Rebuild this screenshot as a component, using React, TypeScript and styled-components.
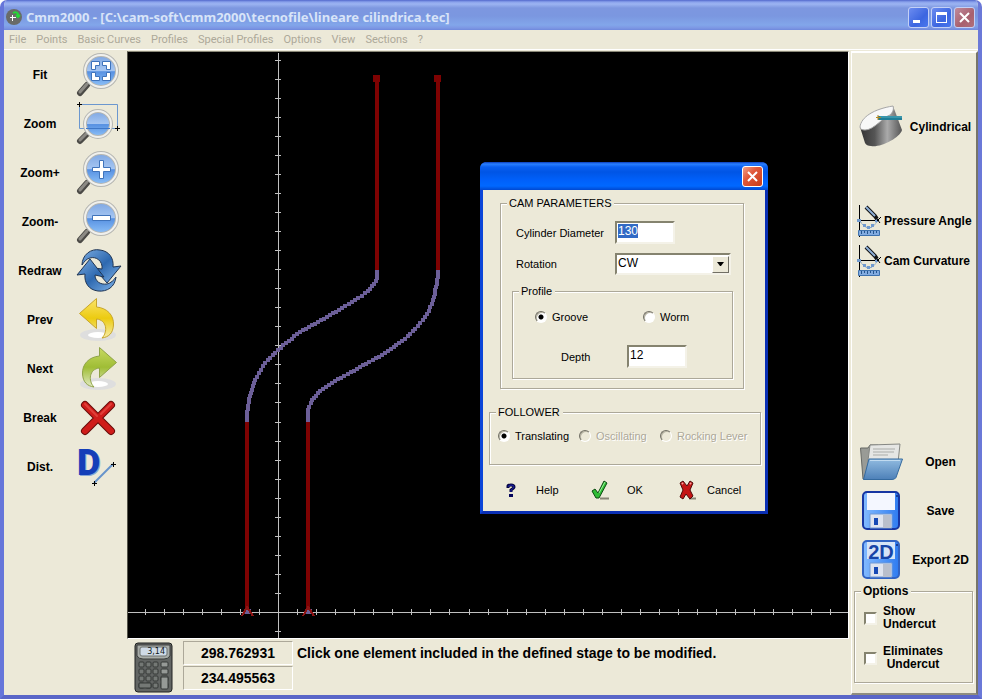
import React from 'react';
import styled, { createGlobalStyle } from 'styled-components';

const beige = '#ece9d8';
const line = '#aca899';

const GlobalStyle = createGlobalStyle`
  * { box-sizing: border-box; }
  html, body, #root { height: 100%; }
  body { margin: 0; background: #fff; font: 11px/14px "Liberation Sans", sans-serif; color: #000; }
  button, input, select { font: inherit; color: inherit; }
  button { background: none; border: 0; padding: 0; }
`;

/* ---------- window frame ---------- */
const Window = styled.div`
  display: flex; flex-direction: column; height: 100vh; overflow: hidden;
  border: 4px solid #6b79d8; border-top: 0;
  border-left-color: #6676da; border-bottom-color: #5a66c8;
  border-radius: 7px 7px 0 0; background: ${beige};
`;
const TitleBar = styled.header`
  display: flex; align-items: center; gap: 4px; flex: none; height: 30px;
  margin: 0 -4px; padding: 4px 7px 0 6px;
  background: linear-gradient(#5268cc 0, #8aa2ec 2px, #9cb4f2 4px, #7d97e0 8px, #7b97e0 16px, #82a6ea 25px, #7d97e4 28px, #6f88dc 30px);
`;
const Title = styled.h1`
  flex: 1; margin: 0; color: #d8e4f8; font: bold 13px/20px "Noto Sans", sans-serif; white-space: nowrap;
`;
const TitleButtons = styled.div`display: flex; gap: 2px;`;
const TitleButton = styled.button<{ $close?: boolean }>`
  width: 21px; height: 21px; border: 1px solid #c3d0f6; border-radius: 3px; display: grid; place-items: center;
  background: ${p => p.$close ? 'linear-gradient(135deg, #c08a9c, #a8606e 60%, #b0707c)' : 'linear-gradient(135deg, #6c8cf0, #3c66e0 60%, #4a78ee)'};
`;
const MenuBar = styled.nav`
  display: flex; flex: none; gap: 10px; height: 20px; padding: 3px 5px 0; border-bottom: 1px solid #fff;
`;
const MenuItem = styled.button`color: #aca899; font: 11px/14px "Roboto", sans-serif; height: 14px;`;
const Body = styled.div`display: flex; flex: 1; min-height: 0;`;

/* ---------- tool columns ---------- */
const LeftBar = styled.aside`flex: none; width: 123px; display: flex; flex-direction: column;`;
const ToolButton = styled.button`
  display: grid; grid-template-columns: 72px 46px; align-items: center; height: 49px;
  font: bold 12px/14px "Liberation Sans", sans-serif; text-align: center;
  svg { display: block; }
`;
const Center = styled.main`flex: 1; min-width: 0; display: flex; flex-direction: column;`;
const Stage = styled.div`
  position: relative; flex: 1; min-height: 0; background: #000; overflow: hidden;
  border: 1px solid; border-color: #8a8878 #fff #fff #55544a; margin-top: 1px;
`;
const Plot = styled.svg`display: block; width: 100%; height: 100%;`;
const StatusBar = styled.footer`
  flex: none; display: grid; grid-template-columns: 40px 110px 1fr; column-gap: 4px; height: 56px; padding: 2px 0 0 7px;
`;
const CalcButton = styled.button`width: 40px; height: 53px; padding-top: 1px; svg { display: block; }`;
const Coordinates = styled.div`display: flex; flex-direction: column; gap: 1px; margin-left: 5px;`;
const Coordinate = styled.output`
  height: 24px; width: 110px; border: 1px solid; border-color: #aca899 #fff #fff #aca899;
  font: bold 14px/22px "Liberation Sans", sans-serif; text-align: center;
`;
const Message = styled.p`
  margin: 0 0 0 5px; padding-top: 4px; font: bold 14px/16px "Liberation Sans", sans-serif; white-space: nowrap;
`;
const RightBar = styled.aside`
  flex: none; width: 127px; display: flex; flex-direction: column; margin: 1px 0 0 2px; padding: 49px 3px 10px 2px;
  border: 2px solid; border-color: #fff #77756a #8f8d80 #fff; border-left-width: 1px; 
`;
const SideButton = styled.button<{ $compact?: boolean }>`
  display: grid; align-items: center; height: ${p => p.$compact ? 40 : 49}px; flex: none;
  grid-template-columns: ${p => p.$compact ? '28px 1fr' : '54px 1fr'}; column-gap: ${p => p.$compact ? 2 : 0}px;
  font: bold 12px/14px "Liberation Sans", sans-serif; white-space: nowrap; text-align: ${p => p.$compact ? 'left' : 'center'};
  svg { display: block; justify-self: ${p => p.$compact ? 'end' : 'center'}; }
`;
const SideGroup = styled.div<{ $gap?: boolean }>`
  display: flex; flex-direction: column; margin-top: ${p => p.$gap ? '50px' : 'auto'};
`;

/* ---------- form parts ---------- */
const Group = styled.fieldset`
  margin: 0; padding: 0; min-width: 0; border: 1px solid ${line};
  box-shadow: 1px 1px 0 #fff, inset 1px 1px 0 #fff;
`;
const Legend = styled.legend<{ $bold?: boolean; $start?: number }>`
  margin-left: ${p => p.$start ?? 6}px; padding: 0 3px 0 2px; background: ${beige};
  font: ${p => p.$bold ? 'bold 12px' : '11px'}/14px "Liberation Sans", sans-serif;
`;
const OptionsGroup = styled(Group)`
  display: flex; flex-direction: column; gap: 14px; padding: 7px 0 11px 9px;
`;
const CheckLabel = styled.label<{ $centered?: boolean }>`
  display: flex; align-items: center; gap: 6px; font: bold 12px/13px "Liberation Sans", sans-serif;
  text-align: ${p => p.$centered ? 'center' : 'left'};
`;
const CheckBox = styled.input`
  appearance: none; flex: none; margin: 0; width: 13px; height: 13px; background: #fff;
  border: 2px solid; border-color: #85836f #f4f2e8 #f4f2e8 #85836f;
  &:checked { background: #333; }
`;
const Radio = styled.input`
  appearance: none; flex: none; margin: 0; width: 12px; height: 12px; border-radius: 50%; background: #fff;
  border: 1px solid; border-color: #716f64 #fff #fff #716f64; box-shadow: inset 1px 1px 0 #b8b5a4;
  &:checked { background: radial-gradient(circle at 5px 5px, #000 2px, #fff 3px); }
  &:disabled { background: ${beige}; }
`;
const RadioLabel = styled.label<{ $disabled?: boolean }>`
  display: flex; align-items: center; gap: 5px; white-space: nowrap;
  ${p => p.$disabled ? 'color: #aca899; text-shadow: 1px 1px 0 #fff;' : ''}
`;

/* ---------- dialog ---------- */
const Dialog = styled.form`
  position: absolute; left: 352px; top: 110px; width: 288px; background: ${beige};
  border: 3px solid #0b45d8; border-top: 0; border-right-color: #0a2fb4; border-bottom-color: #0a2fb4;
  border-radius: 7px 7px 0 0; font: 11px/14px "Liberation Sans", sans-serif;
`;
const DialogTitle = styled.div`
  display: flex; justify-content: flex-end; align-items: center; height: 28px; margin: 0 -3px; padding: 1px 5px 0 0;
  border-radius: 6px 6px 0 0;
  background: linear-gradient(#0a3ab8 0, #2a80ff 2px, #0a5ff0 5px, #0055e5 10px, #0060fa 18px, #0068ff 24px, #0048d0 28px);
`;
const DialogClose = styled.button`
  width: 21px; height: 21px; border: 1px solid #fff; border-radius: 3px; display: grid; place-items: center;
  background: linear-gradient(135deg, #f0a088, #e0583a 40%, #c83c18);
`;
const DialogBody = styled.div`padding: 6px 4px 5px 6px; display: flex; flex-direction: column;`;
const CamGroup = styled(Group)`
  margin: 0 17px 16px 11px; padding: 11px 10px 9px 11px; display: flex; flex-direction: column;
`;
const FieldRow = styled.div`
  display: grid; grid-template-columns: 99px 1fr; align-items: center; padding-left: 4px; margin-bottom: 9px;
`;
const TextBox = styled.input`
  width: 60px; height: 23px; padding: 0 1px 4px; background: #fff; outline: 0; border-radius: 0;
  border: 2px solid; border-color: #85836f #f4f2e8 #f4f2e8 #85836f; font-size: 12px;
  &::selection { background: #316ac5; color: #fff; }
`;
const SelectBox = styled.div`
  display: grid; width: 116px; height: 22px;
  & > * { grid-area: 1 / 1; }
`;
const Select = styled.select`
  appearance: none; width: 100%; height: 22px; padding: 0 20px 2px 1px; background: #fff; border-radius: 0; outline: 0;
  border: 2px solid; border-color: #85836f #f4f2e8 #f4f2e8 #85836f; font-size: 12px;
`;
const Arrow = styled.span`
  justify-self: end; align-self: center; width: 17px; height: 17px; margin-right: 2px; display: grid; place-items: center;
  pointer-events: none; background: ${beige}; border: 1px solid; border-color: #fff #716f64 #716f64 #fff;
`;
const ProfileGroup = styled(Group)`padding: 12px 0 10px; display: flex; flex-direction: column; gap: 21px;`;
const ProfileChoices = styled.div`display: grid; grid-template-columns: 108px 1fr; padding-left: 22px;`;
const DepthRow = styled.div`display: grid; grid-template-columns: 66px 1fr; align-items: center; padding-left: 48px;`;
const FollowerGroup = styled(Group)`
  display: grid; grid-template-columns: 81px 81px 1fr; padding: 10px 0 21px 8px;
`;
const Actions = styled.div`display: grid; grid-template-columns: 88px 88px 1fr; margin-top: 9px; padding-left: 14px;`;
const Action = styled.button<{ $gap: number }>`
  display: flex; align-items: center; gap: ${p => p.$gap}px; height: 32px;
`;

/* ---------- icons ---------- */
type LensKind = 'fit' | 'zoom' | 'plus' | 'minus';
function LensIcon({ kind }: { kind: LensKind }) {
  const small = kind === 'zoom';
  const cx = small ? 22 : 25, cy = small ? 25 : 21, r = small ? 13 : 16;
  const id = 'lens-' + kind;
  return (
    <svg width="46" height="49" viewBox="0 0 46 49" aria-hidden="true">
      <defs>
        <linearGradient id={id} x1="0" y1="0" x2="0" y2="1">
          <stop offset="0" stopColor="#7da6e2" /><stop offset=".5" stopColor="#a6c6f2" />
          <stop offset=".52" stopColor="#5791e2" /><stop offset="1" stopColor="#8fc2f8" />
        </linearGradient>
      </defs>
      {small && <path d="M3.500 5.500H41.500V29.500H3.500Z" fill="none" stroke="#6b97cf" strokeWidth="1" />}
      <path d={small ? 'M4 42L11 35' : 'M4 43L11 35'} stroke="#4c4b47" strokeWidth="6" strokeLinecap="round" />
      <path d={small ? 'M4 41L11 34' : 'M4 42L11 34'} stroke="#8c8a84" strokeWidth="3" strokeLinecap="round" />
      <circle cx={cx} cy={cy} r={r} fill={`url(#${id})`} stroke="#b5b6b2" strokeWidth="4" />
      <circle cx={cx} cy={cy} r={r} fill="none" stroke="#f0f0ec" strokeWidth="2" />
      {small && <path d="M10 29.500H34" stroke="#3f78c8" />}
      {small && <path d="M3.500 3V8M1 5.500H6M41.500 27V32M39 29.500H44" stroke="#000" />}
      {kind === 'fit' && (
        <path
          d="M15.500 11.500h8v4h-4v4h-4zM26.500 11.500h8v8h-4v-4h-4zM15.500 22.500h4v4h4v4h-8zM30.500 22.500h4v8h-8v-4h4z"
          fill="#fff" stroke="#3f73bb"
        />
      )}
      {kind === 'plus' && <path d="M23.500 12.500h4v7h7v4h-7v7h-4v-7h-7v-4h7z" fill="#fff" stroke="#3f73bb" />}
      {kind === 'minus' && <path d="M16.500 18.500h18v5h-18z" fill="#fff" stroke="#3f73bb" />}
    </svg>
  );
}

function RedrawIcon() {
  return (
    <svg width="46" height="49" viewBox="0 0 46 49" aria-hidden="true">
      <defs>
        <linearGradient id="swirl" x1="0" y1="0" x2="1" y2="1">
          <stop offset="0" stopColor="#78a9df" /><stop offset=".5" stopColor="#2e69b0" /><stop offset="1" stopColor="#7eb2e8" />
        </linearGradient>
      </defs>
      <g fill="url(#swirl)" stroke="#1f3554" strokeLinejoin="round">
        <path d="M6 19C6 9 15 2 24 4C33 5 38 12 37 21L45 20L31 37L18 22L26 23C27 15 20 10 14 12C10 13 8 16 6 19Z" />
        <path d="M40 31C39 41 31 46 22 45C13 44 8 37 9 28L1 29L14 13L28 31L19 29C19 35 24 39 31 38C35 37 38 34 40 31Z" />
      </g>
    </svg>
  );
}

function ArrowIcon({ next }: { next?: boolean }) {
  const id = next ? 'next-arrow' : 'prev-arrow';
  return (
    <svg width="46" height="49" viewBox="0 0 46 49" aria-hidden="true">
      <defs>
        <linearGradient id={id} x1="0" y1="0" x2="0" y2="1">
          <stop offset="0" stopColor={next ? '#c8da62' : '#fbe46a'} />
          <stop offset=".5" stopColor={next ? '#9fbd35' : '#eccb10'} />
          <stop offset="1" stopColor={next ? '#e3ebc4' : '#f6edaa'} />
        </linearGradient>
      </defs>
      <ellipse cx="22" cy="40" rx="18" ry="6" fill="#dedede" />
      <ellipse cx="22" cy="40" rx="10" ry="3" fill="#fff" />
      <path
        transform={next ? 'translate(44 0) scale(-1 1)' : undefined}
        d="M3.500 18.500L20.500 3.500V12C31 13 38 20 37.500 30C37 38 33 42 26 43C32 37 31 25 20.500 24V33.500Z"
        fill={`url(#${id})`} stroke={next ? '#8fa347' : '#c7a52a'} strokeLinejoin="round"
      />
    </svg>
  );
}

function BreakIcon() {
  return (
    <svg width="46" height="49" viewBox="0 0 46 49" aria-hidden="true">
      <path d="M9 12L35 38M35 12L9 38" stroke="#680c0a" strokeWidth="8" strokeLinecap="round" />
      <path d="M9 12L35 38M35 12L9 38" stroke="#cf1c1a" strokeWidth="6" strokeLinecap="round" />
      <path d="M9 11L21 23M35 11L25 21" stroke="#e0403a" strokeWidth="2" strokeLinecap="round" />
    </svg>
  );
}

function DistanceIcon() {
  return (
    <svg width="46" height="49" viewBox="0 0 46 49" aria-hidden="true">
      <text x="2" y="34" fontFamily="Roboto, sans-serif" fontWeight="900" fontSize="36" fill="#86a6d6">D</text>
      <text x="1" y="33" fontFamily="Roboto, sans-serif" fontWeight="900" fontSize="36" fill="#143fb8">D</text>
      <path d="M18 41L37 22" stroke="#6793cb" strokeWidth="2" />
      <path d="M18.500 39V44M16 41.500H21M37.500 20V25M35 22.500H40" stroke="#000" />
    </svg>
  );
}

function CylinderIcon() {
  return (
    <svg width="46" height="44" viewBox="0 0 46 44" aria-hidden="true">
      <defs>
        <linearGradient id="metal"><stop offset="0" stopColor="#343434" /><stop offset=".35" stopColor="#555" />
          <stop offset=".65" stopColor="#aaa" /><stop offset="1" stopColor="#555" /></linearGradient>
      </defs>
      <path d="M2 22C12 26 26 16 35 1L44 25C42 33 22 43 13 41C10 41 8 40 7 38Z" fill="url(#metal)" />
      <path d="M2 22C3 12 16 4 35 1C36 4 35 7 32 10C25 12 16 25 7 25C4 25 2 24 2 22Z" fill="#f8f8f8" stroke="#a6a6a6" />
      <path d="M20 13H44" stroke="#207e97" strokeWidth="4" />
      <path d="M22 12H44" stroke="#54aec0" />
      <path d="M20 10V15M18 12.500H23" stroke="#b58920" />
    </svg>
  );
}

function DraftIcon() {
  return (
    <svg width="26" height="34" viewBox="0 0 26 34" aria-hidden="true">
      <path d="M3.500 1V33M1 16.500H23" stroke="#000" />
      <path d="M4 17C9 26 17 26 21 17" fill="none" stroke="#6b96c8" strokeDasharray="3 1" />
      <path d="M1 15h4v3H1zM7 20h3v3H7zM15 20h3v3h-3zM11 22h3v3h-3zM19 15h3v3h-3z" fill="#719bcf" />
      <path d="M10 3L19 12L21 15" fill="none" stroke="#111" strokeWidth="4" />
      <path d="M10 3L19 12" stroke="#8fb0d8" strokeWidth="2" />
      <path d="M21 17L25 13M21 15L24 19" stroke="#000" />
      <path d="M2.500 26.500H23.500V31.500H2.500Z" fill="#82abe0" stroke="#3e72ae" />
      <path d="M5.500 27v3M8.500 27v2M11.500 27v3M14.500 27v2M17.500 27v3M20.500 27v2" stroke="#24568e" />
    </svg>
  );
}

function FolderIcon() {
  return (
    <svg width="46" height="40" viewBox="0 0 46 40" aria-hidden="true">
      <defs><linearGradient id="folder" x1="0" y1="0" x2="0" y2="1"><stop stopColor="#91bbe0" /><stop offset="1" stopColor="#4d80b8" /></linearGradient></defs>
      <path d="M2.500 6H10L12 3H20V37H5Z" fill="#999b96" stroke="#676965" />
      <path d="M12 3L42 2L39 30L8 34Z" fill="#e5e6e4" stroke="#858783" />
      <path d="M15 7H37M15 10H36M15 13H30" stroke="#aaaca9" />
      <path d="M11 17H44.500L38 35.500Q37 37.500 34 37.500H5.500Z" fill="url(#folder)" stroke="#356a9f" />
      <path d="M12 18.500H42" stroke="#c1dbf0" />
    </svg>
  );
}

function DiskIcon({ twoD }: { twoD?: boolean }) {
  const id = twoD ? 'disk-export' : 'disk-save';
  return (
    <svg width="40" height="41" viewBox="0 0 40 41" aria-hidden="true">
      <defs><linearGradient id={id}><stop stopColor="#83bbff" /><stop offset="1" stopColor="#2e7bf0" /></linearGradient></defs>
      <rect x="2" y="2" width="36" height="37" rx="4" fill={`url(#${id})`} stroke={twoD ? '#3163c3' : '#1736a3'} strokeWidth="2" />
      <path d="M6 3H34V20H6Z" fill={twoD ? '#d6e4f7' : '#f4f7ff'} />
      <path d="M9 24H31V38H9Z" fill="#dfe4ef" stroke="#7199d5" />
      <path d="M22 25H30V38H22Z" fill="#b9bfcc" />
      <path d="M13 28H17V35H13Z" fill="#1749b5" />
      <path d="M35 5h2v2h-2z" fill="#173e96" />
      {twoD && <text x="20" y="20" textAnchor="middle" fontFamily="Liberation Sans, sans-serif" fontWeight="bold" fontSize="20" fill="#1644a8">2D</text>}
    </svg>
  );
}

function CalculatorIcon() {
  const keys = [0, 1, 2, 3].flatMap(r => [0, 1, 2, 3].map(c => ({ r, c })));
  return (
    <svg width="40" height="52" viewBox="0 0 40 52" aria-hidden="true">
      <rect x="1" y="1" width="37" height="49" rx="3" fill="#626563" stroke="#202322" />
      <path d="M3 3H36V14Q34 17 30 17H9Q5 17 3 14Z" fill="#a8aca8" stroke="#3a3d3c" />
      <rect x="6" y="5" width="27" height="9" rx="2" fill="#cfdae6" stroke="#6e7370" />
      <text x="31" y="12" textAnchor="end" fontFamily="DejaVu Sans, sans-serif" fontSize="8" fill="#101820">3,14</text>
      {keys.map(({ r, c }) => (
        <rect key={`${r}-${c}`} x={5 + c * 7 + (c === 3 ? 1 : 0)} y={20 + r * 7} width={c === 3 ? 7 : 5} height="5" rx="1"
          fill={c === 3 ? '#969a97' : '#747875'} stroke="#353837" />
      ))}
      <rect x="27" y="35" width="7" height="12" rx="1" fill="#969a97" stroke="#353837" />
      <rect x="5" y="41" width="12" height="5" rx="1" fill="#747875" stroke="#353837" />
    </svg>
  );
}

function AppIcon() {
  return (
    <svg width="16" height="16" viewBox="0 0 16 16" aria-hidden="true">
      <circle cx="8" cy="8" r="8" fill="#696b68" />
      <path d="M6.500 6V12M4 8.500H10" stroke="#fff" />
      <path d="M7 4C10 2 13 4 12 8M10 6L12 8L14 6" fill="none" stroke="#26d936" strokeWidth="2" />
    </svg>
  );
}

const CrossGlyph = () => (
  <svg width="13" height="13" viewBox="0 0 13 13" aria-hidden="true"><path d="M2 2L11 11M11 2L2 11" stroke="#fff" strokeWidth="2" /></svg>
);
const CheckGlyph = () => (
  <svg width="18" height="20" viewBox="0 0 18 20" aria-hidden="true">
    <path d="M9 18.500H18" stroke="#888575" strokeWidth="2" />
    <path d="M1 11L4 9L7 13L13 1L16 3L8 18H5Z" fill="#2fbd35" stroke="#0b4a10" />
    <path d="M14 2L8 13" stroke="#9cf09c" />
  </svg>
);
const RedXGlyph = () => (
  <svg width="18" height="20" viewBox="0 0 18 20" aria-hidden="true">
    <path d="M10 18.500H17" stroke="#888575" strokeWidth="2" />
    <path d="M1 3L4 1L8 6L11 1L14 3L11 10L14 16L11 19L7 14L4 19L1 17L4 10Z" fill="#c41313" stroke="#4e0909" />
    <path d="M3 3L4 4M11 3L12 4" stroke="#f5a0a0" strokeWidth="2" />
  </svg>
);
const HelpGlyph = () => (
  <svg width="16" height="18" viewBox="0 0 16 18" aria-hidden="true">
    <path d="M5 7V5Q5 4 8 4Q11 4 11 6Q11 7 8 9V11" fill="none" stroke="#05053e" strokeWidth="3" />
    <path d="M5 6Q5 4 8 4Q11 4 11 6Q11 7 8 9V11" fill="none" stroke="#1c22b0" strokeWidth="1" />
    <path d="M6 13h4v3H6z" fill="#05055c" />
  </svg>
);

/* ---------- plot ---------- */
type Point = [number, number];
const upperCurve: Point[] = [[249, 216], [249, 226], [246, 232], [240, 239], [227, 248], [211, 258], [190, 270], [172, 280], [158, 291], [150, 298], [137, 311], [127, 328], [122, 344], [119, 360], [119, 369]];
const lowerCurve: Point[] = [[310, 217], [309, 232], [305, 248], [299, 262], [290, 274], [277, 287], [257, 301], [232, 315], [207, 329], [192, 339], [184, 348], [180, 358], [180, 369]];

function stamps(points: Point[]) {
  let d = '';
  for (let i = 1; i < points.length; i++) {
    const [x0, y0] = points[i - 1];
    const [x1, y1] = points[i];
    const n = Math.ceil(Math.hypot(x1 - x0, y1 - y0) / 4);
    for (let k = 0; k <= n; k++) {
      d += `M${Math.round(x0 + (x1 - x0) * k / n) - 2} ${Math.round(y0 + (y1 - y0) * k / n) - 2}h4v4h-4z`;
    }
  }
  return d;
}

function CamPlot() {
  const across = Array.from({ length: 120 }, (_, i) => Math.round(150 + (i - 7) * 19.05));
  const down = Array.from({ length: 60 }, (_, i) => Math.round(560 - (i - 28) * 19.05)).filter(y => y > 2);
  return (
    <Plot shapeRendering="crispEdges" role="img" aria-label="Cam profile">
      <g fill="#c0c0c0">
        <rect x="150" y="1" width="1" height="100%" />
        <rect x="0" y="560" width="100%" height="1" />
        {across.map(x => <rect key={x} x={x} y="557" width="1" height="6" />)}
        {down.map(y => <rect key={y} x="147" y={y} width="6" height="1" />)}
      </g>
      <path d={stamps(upperCurve) + stamps(lowerCurve)} fill="#6c5f98" />
      <path d="M247 24h4v194h-4zM308 24h4v194h-4zM117 370h4v190h-4zM178 370h4v190h-4zM245 23h7v7h-7zM306 23h7v7h-7z" fill="#7e0202" />
      {[119, 180].map(x => (
        <g key={x}>
          <rect x={x - 3} y="557" width="7" height="5" fill="#6c5f98" />
          <path d={`M${x - 5} 564L${x} 555L${x + 6} 564`} fill="none" stroke="#8c1414" strokeWidth="2" />
        </g>
      ))}
    </Plot>
  );
}

function CamDialog() {
  return (
    <Dialog role="dialog" aria-label="Cam parameters" onSubmit={e => e.preventDefault()}>
      <DialogTitle><DialogClose type="button" aria-label="Close"><CrossGlyph /></DialogClose></DialogTitle>
      <DialogBody>
        <CamGroup>
          <Legend $start={-5}>CAM PARAMETERS</Legend>
          <FieldRow>
            <label htmlFor="diameter">Cylinder Diameter</label>
            <TextBox id="diameter" defaultValue="130" autoFocus onFocus={e => e.currentTarget.select()} />
          </FieldRow>
          <FieldRow>
            <label htmlFor="rotation">Rotation</label>
            <SelectBox>
              <Select id="rotation" defaultValue="CW"><option>CW</option></Select>
              <Arrow><svg width="7" height="4" viewBox="0 0 7 4" aria-hidden="true"><path d="M0 0H7L4 4H3Z" fill="#000" /></svg></Arrow>
            </SelectBox>
          </FieldRow>
          <ProfileGroup>
            <Legend>Profile</Legend>
            <ProfileChoices>
              <RadioLabel><Radio type="radio" name="profile" defaultChecked />Groove</RadioLabel>
              <RadioLabel><Radio type="radio" name="profile" />Worm</RadioLabel>
            </ProfileChoices>
            <DepthRow>
              <label htmlFor="depth">Depth</label>
              <TextBox id="depth" defaultValue="12" />
            </DepthRow>
          </ProfileGroup>
        </CamGroup>
        <FollowerGroup>
          <Legend $start={-2}>FOLLOWER</Legend>
          <RadioLabel><Radio type="radio" name="follower" defaultChecked />Translating</RadioLabel>
          <RadioLabel $disabled><Radio type="radio" name="follower" disabled />Oscillating</RadioLabel>
          <RadioLabel $disabled><Radio type="radio" name="follower" disabled />Rocking Lever</RadioLabel>
        </FollowerGroup>
        <Actions>
          <Action type="button" $gap={17}><HelpGlyph />Help</Action>
          <Action type="submit" $gap={18}><CheckGlyph />OK</Action>
          <Action type="button" $gap={10}><RedXGlyph />Cancel</Action>
        </Actions>
      </DialogBody>
    </Dialog>
  );
}

const menus = ['File', 'Points', 'Basic Curves', 'Profiles', 'Special Profiles', 'Options', 'View', 'Sections', '?'];
const tools = [
  { label: 'Fit', icon: <LensIcon kind="fit" /> },
  { label: 'Zoom', icon: <LensIcon kind="zoom" /> },
  { label: 'Zoom+', icon: <LensIcon kind="plus" /> },
  { label: 'Zoom-', icon: <LensIcon kind="minus" /> },
  { label: 'Redraw', icon: <RedrawIcon /> },
  { label: 'Prev', icon: <ArrowIcon /> },
  { label: 'Next', icon: <ArrowIcon next /> },
  { label: 'Break', icon: <BreakIcon /> },
  { label: 'Dist.', icon: <DistanceIcon /> },
];

export default function App() {
  return (
    <>
      <GlobalStyle />
      <Window>
        <TitleBar>
          <AppIcon />
          <Title>{'Cmm2000 - [C:\\cam-soft\\cmm2000\\tecnofile\\lineare cilindrica.tec]'}</Title>
          <TitleButtons>
            <TitleButton aria-label="Minimize"><svg width="13" height="13" aria-hidden="true"><path d="M1 9h7v3H1z" fill="#fff" /></svg></TitleButton>
            <TitleButton aria-label="Maximize"><svg width="13" height="13" aria-hidden="true"><path d="M1 1h11v11H1zM2 4v7h9V4z" fill="#fff" fillRule="evenodd" /></svg></TitleButton>
            <TitleButton $close aria-label="Close window"><CrossGlyph /></TitleButton>
          </TitleButtons>
        </TitleBar>
        <MenuBar>{menus.map(m => <MenuItem key={m}>{m}</MenuItem>)}</MenuBar>
        <Body>
          <LeftBar>
            {tools.map(t => <ToolButton key={t.label}><span>{t.label}</span>{t.icon}</ToolButton>)}
          </LeftBar>
          <Center>
            <Stage><CamPlot /><CamDialog /></Stage>
            <StatusBar>
              <CalcButton aria-label="Calculator"><CalculatorIcon /></CalcButton>
              <Coordinates><Coordinate>298.762931</Coordinate><Coordinate>234.495563</Coordinate></Coordinates>
              <Message>Click one element included in the defined stage to be modified.</Message>
            </StatusBar>
          </Center>
          <RightBar>
            <SideButton><CylinderIcon />Cylindrical</SideButton>
            <SideGroup $gap>
              <SideButton $compact><DraftIcon />Pressure Angle</SideButton>
              <SideButton $compact><DraftIcon />Cam Curvature</SideButton>
            </SideGroup>
            <SideGroup>
              <SideButton><FolderIcon />Open</SideButton>
              <SideButton><DiskIcon />Save</SideButton>
              <SideButton><DiskIcon twoD />Export 2D</SideButton>
              <OptionsGroup>
                <Legend $bold $start={-3}>Options</Legend>
                <CheckLabel><CheckBox type="checkbox" /><span>Show<br />Undercut</span></CheckLabel>
                <CheckLabel $centered><CheckBox type="checkbox" /><span>Eliminates<br />Undercut</span></CheckLabel>
              </OptionsGroup>
            </SideGroup>
          </RightBar>
        </Body>
      </Window>
    </>
  );
}
